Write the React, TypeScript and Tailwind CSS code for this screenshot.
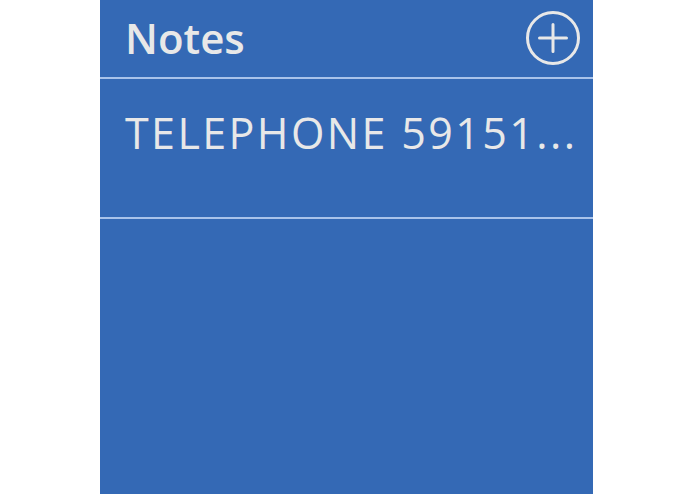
import React from "react";

const notes = [{ id: 1, title: "TELEPHONE 59151..." }];

const PlusCircle = () => (
  <svg width="56" height="56" viewBox="0 0 56 56" fill="none" stroke="#e8e8e8" strokeWidth={3}>
    <circle cx="28" cy="28" r="25.5" />
    <path d="M28 14.5v27M14.5 28h27" strokeLinecap="round" />
  </svg>
);

export default function App() {
  return (
    <div className="w-[695px] h-[494px] bg-white flex" style={{ fontFamily: '"Open Sans", "Noto Sans", sans-serif' }}>
      <div className="ml-[100px] w-[493px] h-full bg-[#3469b5] flex flex-col text-[#e8e8e8]">
        {/* Header */}
        <div className="h-[79px] flex items-center justify-between pl-[25px] pr-[12px] border-b-2 border-[#a9c3ea]">
          <h1 className="text-[42px] font-semibold leading-none -mt-[2px]">Notes</h1>
          <button className="-mt-[1px]">
            <PlusCircle />
          </button>
        </div>

        {/* List */}
        {notes.map((note) => (
          <div key={note.id} className="h-[140px] border-b-2 border-[#a9c3ea] pl-[25px] pr-[10px] pt-[26px]">
            <p className="text-[43px] leading-[56px] tracking-[2.4px] whitespace-nowrap">{note.title}</p>
          </div>
        ))}
      </div>
    </div>
  );
}
